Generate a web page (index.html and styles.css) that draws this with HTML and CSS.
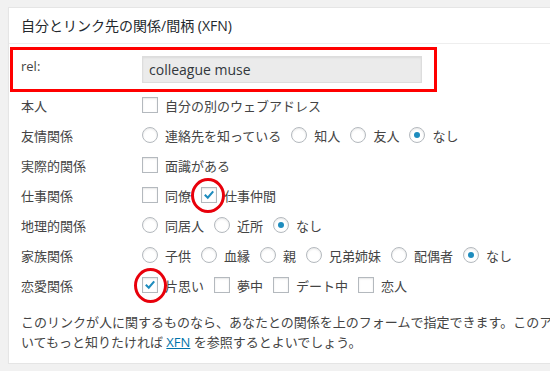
FILE: index.html
```html
<!DOCTYPE html>
<html lang="ja">
<head>
    <meta charset="UTF-8">
    <meta name="viewport" content="width=device-width, initial-scale=1.0">
    <title>XFN</title>
    <link rel="stylesheet" href="styles.css">
</head>
<body>
    <div class="postbox">
        <h2 class="hndle">自分とリンク先の関係/間柄 (XFN)</h2>
        <div class="inside">
            <div class="rel-row">
                <div class="rel-label">rel:</div>
                <input class="rel-input" type="text" value="colleague muse" readonly>
            </div>

            <div class="row">
                <div class="row-label">本人</div>
                <div class="opts">
                    <label class="opt"><span class="box"></span>自分の別のウェブアドレス</label>
                </div>
            </div>

            <div class="row">
                <div class="row-label">友情関係</div>
                <div class="opts">
                    <label class="opt"><span class="radio"></span>連絡先を知っている</label>
                    <label class="opt"><span class="radio"></span>知人</label>
                    <label class="opt"><span class="radio"></span>友人</label>
                    <label class="opt"><span class="radio on"></span>なし</label>
                </div>
            </div>

            <div class="row">
                <div class="row-label">実際的関係</div>
                <div class="opts">
                    <label class="opt"><span class="box"></span>面識がある</label>
                </div>
            </div>

            <div class="row">
                <div class="row-label">仕事関係</div>
                <div class="opts">
                    <label class="opt"><span class="box"></span>同僚</label>
                    <label class="opt"><span class="box on">
                        <svg viewBox="0 0 16 16" width="14" height="14"><path d="M3.2 7.6 L6.6 11 L12.8 3.8" fill="none" stroke="#1e8cbe" stroke-width="2.4"/></svg>
                        <span class="mark mark-work"></span>
                    </span>仕事仲間</label>
                </div>
            </div>

            <div class="row">
                <div class="row-label">地理的関係</div>
                <div class="opts">
                    <label class="opt"><span class="radio"></span>同居人</label>
                    <label class="opt"><span class="radio"></span>近所</label>
                    <label class="opt"><span class="radio on"></span>なし</label>
                </div>
            </div>

            <div class="row">
                <div class="row-label">家族関係</div>
                <div class="opts">
                    <label class="opt"><span class="radio"></span>子供</label>
                    <label class="opt"><span class="radio"></span>血縁</label>
                    <label class="opt"><span class="radio"></span>親</label>
                    <label class="opt"><span class="radio"></span>兄弟姉妹</label>
                    <label class="opt"><span class="radio"></span>配偶者</label>
                    <label class="opt"><span class="radio on"></span>なし</label>
                </div>
            </div>

            <div class="row">
                <div class="row-label">恋愛関係</div>
                <div class="opts">
                    <label class="opt"><span class="box on">
                        <svg viewBox="0 0 16 16" width="14" height="14"><path d="M3.2 7.6 L6.6 11 L12.8 3.8" fill="none" stroke="#1e8cbe" stroke-width="2.4"/></svg>
                        <span class="mark mark-love"></span>
                    </span>片思い</label>
                    <label class="opt"><span class="box"></span>夢中</label>
                    <label class="opt"><span class="box"></span>デート中</label>
                    <label class="opt"><span class="box"></span>恋人</label>
                </div>
            </div>

            <p class="desc">このリンクが人に関するものなら、あなたとの関係を上のフォームで指定できます。このアイデアについてもっと知りたければ <a href="#">XFN</a> を参照するとよいでしょう。</p>
        </div>
    </div>
</body>
</html>
```

FILE: styles.css
```css
html, body {
    overflow: hidden;
}

body {
    margin: 0;
    background: #f1f1f1;
    font-family: "Open Sans", "Noto Sans CJK JP", sans-serif;
    font-size: 13px;
    color: #444;
}

.postbox {
    margin: 7px 0 0 8px;
    width: 700px;
    background: #fff;
    border: 1px solid #e5e5e5;
    box-shadow: 0 1px 1px rgba(0, 0, 0, 0.04);
}

.hndle {
    margin: 0;
    height: 35px;
    line-height: 35px;
    padding: 0 12px;
    font-size: 14px;
    font-weight: normal;
    color: #23282d;
    border-bottom: 1px solid #eee;
}

.inside {
    padding: 3px 0 11px 0;
}

.rel-row {
    display: flex;
    margin-left: 1px;
    width: 415px;
    border: 3px solid #ff0000;
    padding: 6px 6px 6px 0;
}

.rel-label {
    width: 121px;
    padding-left: 8px;
    line-height: 20px;
}

.rel-input {
    width: 280px;
    height: 27px;
    box-sizing: border-box;
    margin: 0;
    padding: 0 6px;
    font-family: "Open Sans", sans-serif;
    font-size: 14px;
    color: #32373c;
    background: #ebebeb;
    border: 1px solid #ddd;
    box-shadow: inset 0 1px 2px rgba(0, 0, 0, 0.07);
    outline: none;
}

.row {
    display: flex;
    align-items: center;
    height: 30px;
    padding-left: 12px;
}

.rel-row + .row {
    margin-top: -2px;
}

.row-label {
    width: 121px;
    flex-shrink: 0;
}

.opts {
    display: flex;
    align-items: center;
}

.opt {
    display: flex;
    align-items: center;
    gap: 7px;
    margin-right: 10px;
    white-space: nowrap;
}

.box, .radio {
    position: relative;
    width: 16px;
    height: 16px;
    box-sizing: border-box;
    border: 1px solid #b4b9be;
    background: #fff;
    box-shadow: inset 0 1px 2px rgba(0, 0, 0, 0.1);
    flex-shrink: 0;
    display: flex;
    align-items: center;
    justify-content: center;
}

.radio {
    border-radius: 50%;
}

.radio.on::before {
    content: "";
    width: 6px;
    height: 6px;
    border-radius: 50%;
    background: #1e8cbe;
}

.mark {
    position: absolute;
    border: 3px solid #e8000b;
    border-radius: 50%;
}

.mark-work {
    width: 28px;
    height: 29px;
    left: -11px;
    top: -10px;
}

.mark-love {
    width: 27px;
    height: 29px;
    left: -9px;
    top: -10px;
}

.desc {
    width: 600px;
    margin: 12px 0 0 12px;
    line-height: 20px;
    color: #444;
}

.desc a {
    color: #0073aa;
}
```
